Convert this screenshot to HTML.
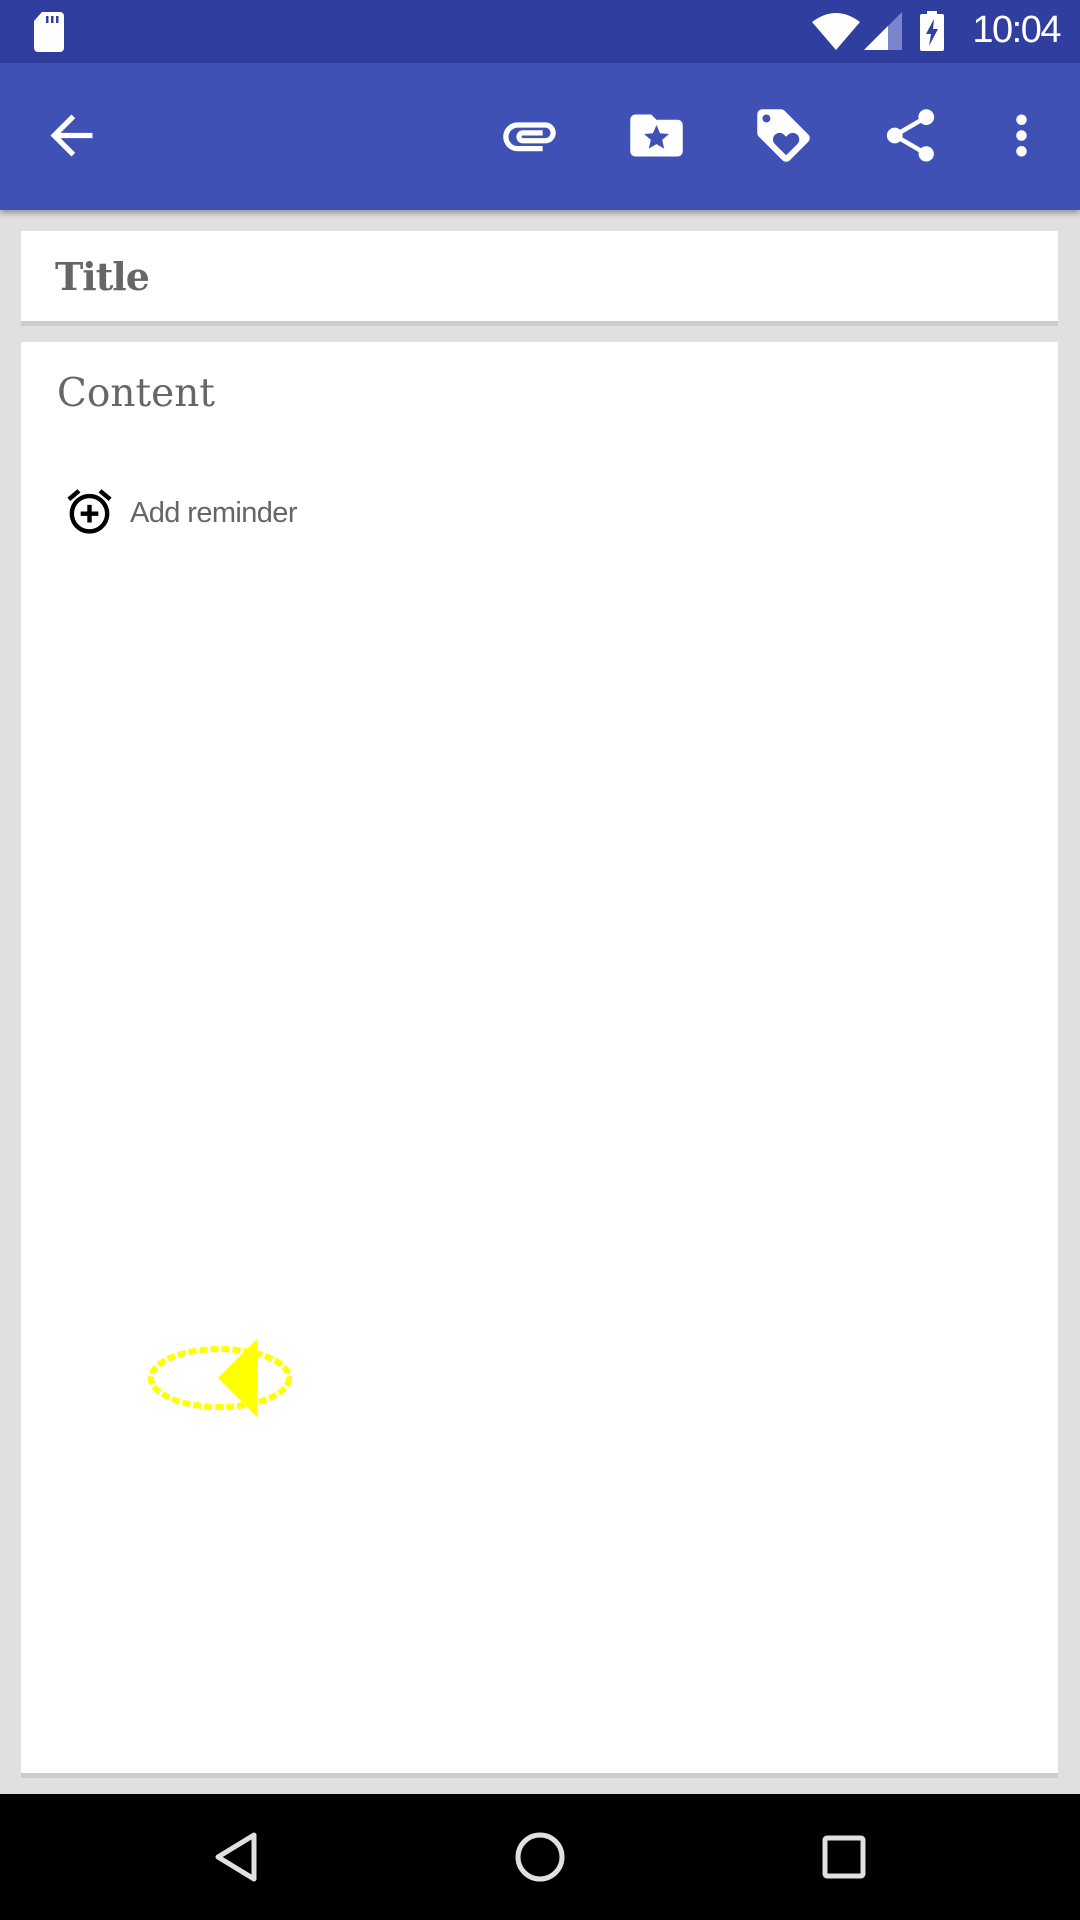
<!DOCTYPE html>
<html><head><meta charset="utf-8"><style>
*{margin:0;padding:0;box-sizing:border-box}
body{width:1080px;height:1920px;background:#E0E0E0;position:relative;overflow:hidden;font-family:"Liberation Sans",sans-serif}
.abs{position:absolute}
#status{left:0;top:0;width:1080px;height:63px;background:#303F9F}
#bar{left:0;top:63px;width:1080px;height:147px;background:#3F51B5;box-shadow:0 3px 6px rgba(0,0,0,.35)}
.card{background:#fff;left:21px;width:1037px;border-bottom:5px solid #CCCCCC}
#nav{left:0;top:1794px;width:1080px;height:126px;background:#000}
</style></head><body>
<div id="status" class="abs">
<svg class="abs" style="left:34px;top:12px" width="30" height="40" viewBox="0 0 30 40"><path d="M8 0H26a4 4 0 0 1 4 4V36a4 4 0 0 1-4 4H4a4 4 0 0 1-4-4V9z" fill="#fff"/><rect x="12" y="4" width="2.5" height="7" fill="#303F9F"/><rect x="17" y="4" width="2.5" height="7" fill="#303F9F"/><rect x="22" y="4" width="2.5" height="7" fill="#303F9F"/></svg>
<svg class="abs" style="left:812px;top:12px" width="48" height="38" viewBox="0 0 48 38"><path d="M0 10Q24 -8 48 10L24 38z" fill="#fff"/></svg>
<svg class="abs" style="left:864px;top:12px" width="38" height="38" viewBox="0 0 38 38"><path d="M38 0V38H0z" fill="#7986CB"/><path d="M24 14V38H0z" fill="#fff"/></svg>
<svg class="abs" style="left:920px;top:11px" width="24" height="40" viewBox="0 0 24 40"><rect x="7" y="0" width="10" height="4" fill="#fff"/><rect x="0" y="3" width="24" height="37" rx="2" fill="#fff"/><path d="M14 8L6 23H11L9 35L18 18H13z" fill="#303F9F"/></svg>
<div class="abs" style="left:960px;top:9px;font-size:38px;color:#fff;width:100px;text-align:right;letter-spacing:-1.5px">10:04</div>
</div>
<div id="bar" class="abs">
<svg class="abs" style="left:40px;top:41px" width="63" height="63" viewBox="0 0 24 24"><path fill="#fff" d="M20 11H7.830l5.59-5.59L12 4l-8 8 8 8 1.41-1.41L7.83 13H20v-2z"/></svg>
<svg class="abs" style="left:498px;top:41px" width="63" height="63" viewBox="0 0 24 24"><path fill="#fff" d="M2 12.5C2 9.46 4.46 7 7.5 7H18c2.21 0 4 1.79 4 4s-1.79 4-4 4H9.5C8.12 15 7 13.88 7 12.5S8.12 10 9.5 10H17v2H9.41c-.55 0-.55 1 0 1H18c1.1 0 2-.9 2-2s-.9-2-2-2H7.5C5.57 9 4 10.57 4 12.5S5.57 16 7.5 16H17v2H7.5C4.46 18 2 15.54 2 12.5z"/></svg>
<svg class="abs" style="left:625px;top:41px" width="63" height="63" viewBox="0 0 24 24"><path fill="#fff" d="M20 6h-8l-2-2H4c-1.1 0-1.99.9-1.99 2L2 18c0 1.1.9 2 2 2h16c1.1 0 2-.9 2-2V8c0-1.1-.9-2-2-2z"/><path fill="#3F51B5" d="M14.94 17L12 15.28 9.06 17l.78-3.33-2.59-2.24 3.41-.29L12 8l1.34 3.14 3.41.29-2.59 2.24.78 3.33z"/></svg>
<svg class="abs" style="left:752px;top:41px" width="63" height="63" viewBox="0 0 24 24"><path fill="#fff" fill-rule="evenodd" d="M21.41 11.58l-9-9C12.05 2.22 11.55 2 11 2H4c-1.1 0-2 .9-2 2v7c0 .55.22 1.05.59 1.42l9 9c.36.36.86.58 1.41.58.55 0 1.050-.22 1.41-.59l7-7c.37-.36.59-.86.59-1.41 0-.55-.23-1.06-.59-1.42zM5.5 7C4.67 7 4 6.33 4 5.5S4.67 4 5.5 4 7 4.67 7 5.5 6.33 7 5.5 7zm11.77 8.27L13 19.54l-4.27-4.27C8.28 14.81 8 14.19 8 13.5c0-1.38 1.120-2.5 2.5-2.5.69 0 1.32.28 1.77.74l.73.72.73-.73c.45-.45 1.08-.73 1.77-.73 1.38 0 2.5 1.12 2.5 2.5 0 .69-.28 1.32-.73 1.770z"/></svg>
<svg class="abs" style="left:879px;top:41px" width="63" height="63" viewBox="0 0 24 24"><path fill="#fff" d="M18 16.08c-.76 0-1.44.3-1.96.77L8.91 12.7c.05-.23.09-.46.09-.7s-.04-.47-.09-.7l7.05-4.11c.54.5 1.25.81 2.04.81 1.66 0 3-1.34 3-3s-1.34-3-3-3-3 1.34-3 3c0 .24.04.47.09.7L8.04 9.81C7.5 9.31 6.79 9 6 9c-1.66 0-3 1.340-3 3s1.34 3 3 3c.79 0 1.5-.31 2.04-.81l7.12 4.16c-.05.21-.08.43-.08.65 0 1.61 1.31 2.92 2.92 2.92 1.61 0 2.92-1.31 2.92-2.92s-1.31-2.92-2.92-2.92z"/></svg>
<svg class="abs" style="left:990px;top:41px" width="63" height="63" viewBox="0 0 24 24"><path fill="#fff" d="M12 8c1.1 0 2-.9 2-2s-.9-2-2-2-2 .9-2 2 .9 2 2 2zm0 2c-1.1 0-2 .9-2 2s.9 2 2 2 2-.9 2-2-.9-2-2-2zm0 6c-1.1 0-2 .9-2 2s.9 2 2 2 2-.9 2-2-.9-2-2-2z"/></svg>
</div>
<div class="abs card" style="top:231px;height:95px"></div>
<div class="abs" style="left:55px;top:254px;font-family:'DejaVu Serif',serif;font-weight:bold;font-size:38px;color:#666;letter-spacing:-1px">Title</div>
<div class="abs card" style="top:342px;height:1436px"></div>
<div class="abs" style="left:57px;top:371px;font-family:'DejaVu Serif',serif;font-size:39px;color:#666">Content</div>
<svg class="abs" style="left:63px;top:485px" width="53" height="53" viewBox="0 0 24 24"><path fill="#000" d="M7.88 3.39L6.6 1.86 2 5.71l1.29 1.53 4.59-3.85zM22 5.72l-4.6-3.86-1.29 1.53 4.6 3.86L22 5.72zM12 4c-4.97 0-9 4.03-9 9s4.02 9 9 9c4.97 0 9-4.03 9-9s-4.03-9-9-9zm0 16c-3.87 0-7-3.13-7-7s3.13-7 7-7 7 3.13 7 7-3.13 7-7 7zm1-11h-2v3H8v2h3v3h2v-3h3v-2h-3V9z"/></svg>
<div class="abs" style="left:130px;top:497px;font-size:29px;color:#666;letter-spacing:-0.6px">Add reminder</div>
<svg class="abs" style="left:140px;top:1330px" width="160" height="100" viewBox="140 1330 160 100"><ellipse cx="220" cy="1378" rx="69" ry="29" fill="none" stroke="#ffff00" stroke-width="6" stroke-dasharray="8 3"/><path d="M218 1378L257 1339V1417z" fill="#ffff00"/></svg>
<div id="nav" class="abs">
<svg class="abs" style="left:0;top:0" width="1080" height="126" viewBox="0 1794 1080 126"><path d="M254 1835V1879L218 1857z" fill="none" stroke="#e0e0e0" stroke-width="5" stroke-linejoin="round"/><circle cx="540" cy="1857" r="22" fill="none" stroke="#e0e0e0" stroke-width="5"/><rect x="825" y="1838" width="38" height="38" rx="2" fill="none" stroke="#e0e0e0" stroke-width="5"/></svg>
</div>
</body></html>
